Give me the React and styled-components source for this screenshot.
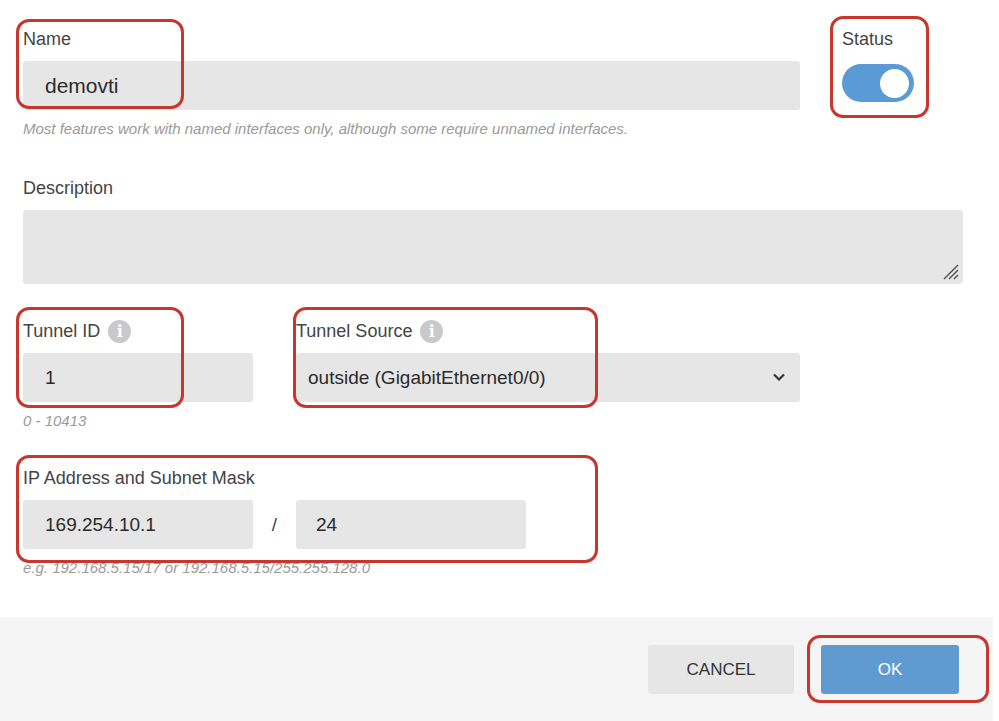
import React from 'react';
import styled, { createGlobalStyle } from 'styled-components';

const Global = createGlobalStyle`
  html, body { margin: 0; padding: 0; background: #fff; }
  body { font-family: "Liberation Sans", Arial, sans-serif; color: #333; }
`;

const Page = styled.div`
  position: relative;
  width: 999px;
  height: 721px;
  overflow: hidden;
  background: #fff;
`;

const Form = styled.div`
  padding: 28px 0 0 23px;
  width: 963px;
  height: 617px;
  box-sizing: border-box;
`;

const TopRow = styled.div`
  display: grid;
  grid-template-columns: 777px 1fr;
  column-gap: 42px;
`;

const Field = styled.div`
  display: flex;
  flex-direction: column;
  width: ${p => p.width || 'auto'};
  margin-top: ${p => p.top || 0}px;
`;

const Label = styled.div`
  font-size: 18px;
  color: #444;
  height: 22px;
  margin-bottom: 11px;
  display: flex;
  align-items: center;
  gap: 8px;
`;

const Info = styled.span`
  width: 23px;
  height: 23px;
  border-radius: 50%;
  background: #c9c9c9;
  color: #fff;
  font-family: "DejaVu Serif", serif;
  font-weight: bold;
  font-size: 16px;
  display: inline-flex;
  align-items: center;
  justify-content: center;
`;

const Input = styled.div`
  height: 49px;
  width: ${p => p.width || '100%'};
  flex-shrink: 0;
  background: #e6e6e6;
  border-radius: 3px;
  box-sizing: border-box;
  padding-left: ${p => p.pad || 22}px;
  display: flex;
  align-items: center;
  font-size: ${p => p.size || 19}px;
  color: #2b2b2b;
  position: relative;
`;

const Textarea = styled.div`
  height: 74px;
  background: #e6e6e6;
  border-radius: 3px;
  position: relative;
`;

const Grip = styled.svg`
  position: absolute;
  right: 3px;
  bottom: 3px;
`;

const Help = styled.div`
  font-style: italic;
  font-size: 15px;
  color: #9a9a9a;
  margin-top: 10px;
`;

const Toggle = styled.div`
  width: 72px;
  height: 38px;
  border-radius: 19px;
  background: #5b9bd5;
  display: flex;
  align-items: center;
  justify-content: flex-end;
  padding-right: 5px;
  box-sizing: border-box;
  margin-top: 3px;
`;

const Knob = styled.div`
  width: 29px;
  height: 29px;
  border-radius: 50%;
  background: #fff;
`;

const Row = styled.div`
  display: flex;
  align-items: flex-start;
  gap: ${p => p.gap ?? 43}px;
  margin-top: ${p => p.top || 0}px;
`;

const Slash = styled.div`
  width: 43px;
  height: 49px;
  display: flex;
  align-items: center;
  justify-content: center;
  font-size: 19px;
  color: #444;
`;

const Chevron = styled.svg`
  position: absolute;
  right: 14px;
  top: 19px;
`;

const Footer = styled.div`
  height: 104px;
  width: 993px;
  background: #f5f5f5;
  display: flex;
  justify-content: flex-end;
  align-items: flex-start;
  padding: 28px 34px 0 0;
  box-sizing: border-box;
  gap: 27px;
`;

const Button = styled.button`
  height: 49px;
  width: ${p => p.width}px;
  border: none;
  border-radius: 3px;
  background: ${p => (p.primary ? '#5f9ad0' : '#e6e6e6')};
  color: ${p => (p.primary ? '#fff' : '#333')};
  font-family: "Liberation Sans", Arial, sans-serif;
  font-size: 17px;
`;

const Mark = styled.div`
  position: absolute;
  border: 3px solid #c8372d;
  border-radius: 13px;
  box-sizing: border-box;
  pointer-events: none;
`;

const marks = [
  { l: 16, t: 19, w: 168, h: 90 },
  { l: 830, t: 16, w: 99, h: 102 },
  { l: 16, t: 307, w: 168, h: 101 },
  { l: 293, t: 307, w: 305, h: 101 },
  { l: 16, t: 455, w: 582, h: 108 },
  { l: 807, t: 635, w: 182, h: 68 },
];

export default function App() {
  return (
    <Page>
      <Global />
      <Form>
        <TopRow>
          <Field>
            <Label>Name</Label>
            <Input size={21}>demovti</Input>
            <Help>Most features work with named interfaces only, although some require unnamed interfaces.</Help>
          </Field>
          <Field>
            <Label>Status</Label>
            <Toggle><Knob /></Toggle>
          </Field>
        </TopRow>

        <Field top={40}>
          <Label>Description</Label>
          <Textarea>
            <Grip width="20" height="20" viewBox="0 0 20 20">
              <path d="M4 18L18 4M9 18L18 9M14 18L18 14" stroke="#555" strokeWidth="1.5" />
            </Grip>
          </Textarea>
        </Field>

        <Row top={36}>
          <Field width="230px">
            <Label>Tunnel ID <Info>i</Info></Label>
            <Input>1</Input>
            <Help>0 - 10413</Help>
          </Field>
          <Field width="504px">
            <Label>Tunnel Source <Info>i</Info></Label>
            <Input pad={12}>
              outside (GigabitEthernet0/0)
              <Chevron width="14" height="10" viewBox="0 0 14 10">
                <path d="M2 2.5L7 7.5L12 2.5" fill="none" stroke="#333" strokeWidth="2.2" />
              </Chevron>
            </Input>
          </Field>
        </Row>

        <Field top={38}>
          <Label>IP Address and Subnet Mask</Label>
          <Row gap={0}>
            <Input width="230px">169.254.10.1</Input>
            <Slash>/</Slash>
            <Input width="230px" pad={20}>24</Input>
          </Row>
          <Help>e.g. 192.168.5.15/17 or 192.168.5.15/255.255.128.0</Help>
        </Field>
      </Form>
      <Footer>
        <Button width={146}>CANCEL</Button>
        <Button width={138} primary>OK</Button>
      </Footer>
      {marks.map((m, i) => (
        <Mark key={i} style={{ left: m.l, top: m.t, width: m.w, height: m.h }} />
      ))}
    </Page>
  );
}
